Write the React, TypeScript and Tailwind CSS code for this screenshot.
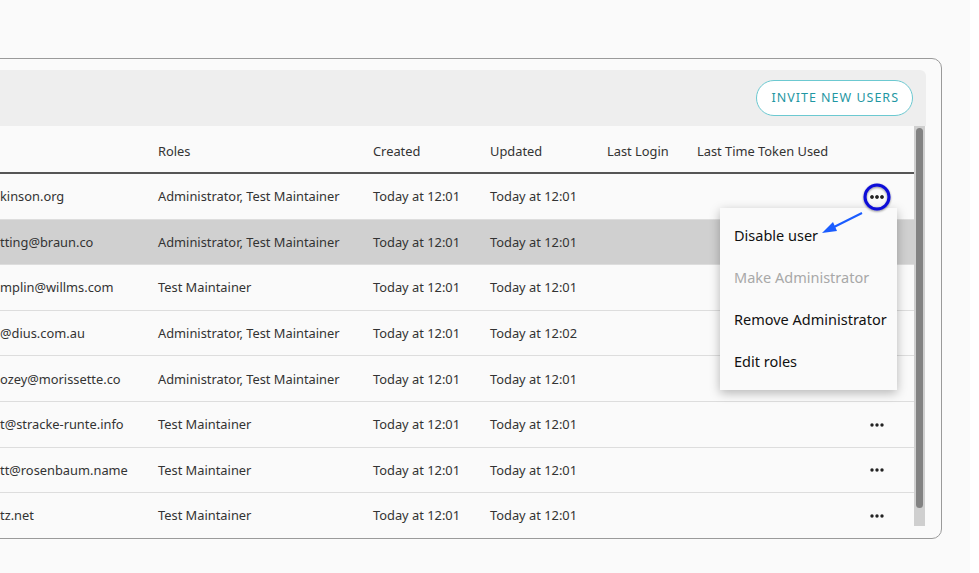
type Row = { email: string; roles: string; created: string; updated: string; dots: boolean };

const rows: Row[] = [
    { email: "kinson.org", roles: "Administrator, Test Maintainer", created: "Today at 12:01", updated: "Today at 12:01", dots: true },
    { email: "tting@braun.co", roles: "Administrator, Test Maintainer", created: "Today at 12:01", updated: "Today at 12:01", dots: false },
    { email: "mplin@willms.com", roles: "Test Maintainer", created: "Today at 12:01", updated: "Today at 12:01", dots: false },
    { email: "@dius.com.au", roles: "Administrator, Test Maintainer", created: "Today at 12:01", updated: "Today at 12:02", dots: false },
    { email: "ozey@morissette.co", roles: "Administrator, Test Maintainer", created: "Today at 12:01", updated: "Today at 12:01", dots: false },
    { email: "t@stracke-runte.info", roles: "Test Maintainer", created: "Today at 12:01", updated: "Today at 12:01", dots: true },
    { email: "tt@rosenbaum.name", roles: "Test Maintainer", created: "Today at 12:01", updated: "Today at 12:01", dots: true },
    { email: "tz.net", roles: "Test Maintainer", created: "Today at 12:01", updated: "Today at 12:01", dots: true },
];

const cols = "grid grid-cols-[158px_215px_117px_117px_90px_160px_40px_16px] items-center";

const Dots = () => (
    <svg width="16" height="4" viewBox="0 0 16 4" className="mx-auto">
        <circle cx="3" cy="2" r="1.7" fill="#222" />
        <circle cx="8" cy="2" r="1.7" fill="#222" />
        <circle cx="13" cy="2" r="1.7" fill="#222" />
    </svg>
);

const App = () => {
    return (
        <div className="relative w-full h-[573px] overflow-hidden bg-[#fafafa] text-[#333] font-['Noto_Sans','Open_Sans',sans-serif]">
            <div className="absolute right-0 top-0 h-full w-[9px] bg-white" />
            <div className="pt-[58px] ml-[-12px] w-[954px]">
                <div className="h-[481px] border border-[#9a9a9a] rounded-[10px] pt-[11px] pr-[15px] pl-[11px]">
                    <div className="h-[56px] bg-[#eeeeee] rounded-tr-[6px] flex items-center justify-end pr-[13px]">
                        <button className="h-[36px] pl-[14px] pr-[13px] rounded-full border border-[#6cc9d1] bg-white text-[#1f97a3] text-[12.5px] tracking-[1px]">
                            INVITE NEW USERS
                        </button>
                    </div>
                    <div className="flex h-[400px]">
                        <div className="w-[914px] overflow-hidden text-[12.85px]">
                            <div className={`${cols} h-[48px] pt-[5px] border-b-2 border-[#555]`}>
                                <div />
                                <div>Roles</div>
                                <div>Created</div>
                                <div>Updated</div>
                                <div>Last Login</div>
                                <div className="col-span-3">Last Time Token Used</div>
                            </div>
                            {rows.map((r, i) => (
                                <div
                                    key={i}
                                    className={`${cols} h-[45.6px] pt-[1px] border-b border-[#dddddd] ${i === 1 ? "bg-[#d0d0d0]" : ""}`}
                                >
                                    <div className="whitespace-nowrap">{r.email}</div>
                                    <div>{r.roles}</div>
                                    <div>{r.created}</div>
                                    <div>{r.updated}</div>
                                    <div />
                                    <div />
                                    <div>{r.dots && <Dots />}</div>
                                    <div />
                                </div>
                            ))}
                        </div>
                        <div className="w-[11px] bg-[#cfcfcf] pt-[2px] pb-[18px] flex justify-center">
                            <div className="w-[7px] h-full rounded-full bg-[#828282]" />
                        </div>
                    </div>
                </div>
            </div>

            <div className="absolute left-[720px] top-[208px] w-[177px] bg-[#fafafa] shadow-[0_3px_10px_rgba(0,0,0,0.28)] py-[7px] text-[14.5px] text-[#111] whitespace-nowrap">
                <div className="h-[42px] flex items-center pl-[14px]">Disable user</div>
                <div className="h-[42px] flex items-center pl-[14px] text-[#a8a8a8]">Make Administrator</div>
                <div className="h-[42px] flex items-center pl-[14px]">Remove Administrator</div>
                <div className="h-[42px] flex items-center pl-[14px]">Edit roles</div>
            </div>

            <svg className="absolute left-0 top-0 pointer-events-none" width="979" height="573">
                <defs>
                    <filter id="sh" x="-50%" y="-50%" width="200%" height="200%">
                        <feDropShadow dx="0" dy="1" stdDeviation="1.2" floodColor="#000" floodOpacity="0.45" />
                    </filter>
                </defs>
                <circle cx="877" cy="197" r="12" fill="none" stroke="#0a0ad8" strokeWidth="3" filter="url(#sh)" />
                <line x1="862" y1="213" x2="832" y2="228" stroke="#1a5cff" strokeWidth="2" />
                <polygon points="822,233 833,222 837,231" fill="#1a5cff" />
            </svg>
            <div className="absolute left-[869px] top-[195px]">
                <Dots />
            </div>
        </div>
    );
};

export default App;
